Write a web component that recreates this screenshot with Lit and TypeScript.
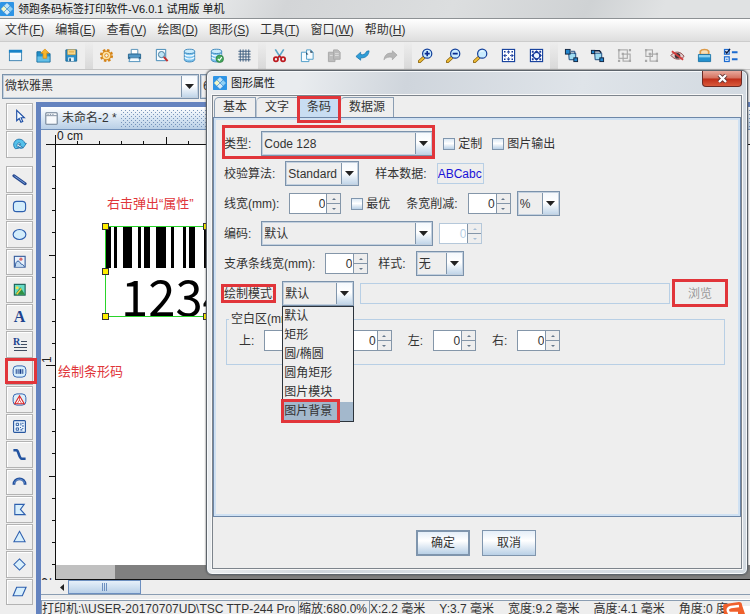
import { LitElement, html, svg, css, TemplateResult } from "lit";
import { customElement, property } from "lit/decorators.js";

const wrap = (body: TemplateResult, size = 16) =>
  html`<svg width=${size} height=${size} viewBox="0 0 16 16" aria-hidden="true">${body}</svg>`;

const logo = (size: number) => wrap(svg`
  <rect width="16" height="16" rx="1" fill="#2e95e6"/>
  <g stroke="#1b6fc0" stroke-width=".4"><path d="M8 .8l3.600 3.600L8 8 4.400 4.400z" fill="#bfe3f7"/><path d="M4.400 4.400L8 8l-3.600 3.600L.8 8z" fill="#f2f7c8"/>
  <path d="M11.600 4.400L15.200 8l-3.600 3.600L8 8z" fill="#8fd0f5"/><path d="M8 8l3.600 3.600L8 15.200l-3.600-3.600z" fill="#d6ecfa"/></g>`, size);

const lens = (mark: TemplateResult) => svg`
  <path d="M1.600 14.400l4.600-4.200" stroke="#8a6410" stroke-width="3.600" stroke-linecap="round"/>
  <path d="M1.800 14.200l4.200-3.800" stroke="#f0bd35" stroke-width="2" stroke-linecap="round"/>
  <circle cx="9.800" cy="6" r="4.900" fill="#c9ecff" stroke="#123f9a" stroke-width="1.300"/>${mark}`;
const cylinder = svg`
  <path d="M2.500 3.500v9c0 1.200 2.400 2.400 5.500 2.400s5.500-1.200 5.500-2.400v-9z" fill="#7cc3ee" stroke="#3c86bb"/>
  <path d="M3 6.600c1 2.400 9 2.400 10 0M3 9.900c1 2.400 9 2.400 10 0" fill="none" stroke="#f3fbff" stroke-width="1.200"/>
  <ellipse cx="8" cy="3.600" rx="5.500" ry="2.300" fill="#c9ebfc" stroke="#3c86bb"/>`;
const groupBoxes = (a: number) => svg`
  <g fill="none" stroke="#a9a9a9" stroke-width="1.200"><rect x="2" y="2" width=${a} height=${a}/><rect x="6.500" y="6.500" width="7.500" height="7.500"/></g>
  <g fill="#a9a9a9"><path d="M1 1h2.400v2.400H1zM12.600 ${a > 8 ? 1 : 5}h2.400v2.400h-2.400zM1 12.600h2.400v2.400H1zM12.600 12.600h2.400v2.400h-2.400zM5 5h2.400v2.400H5z"/></g>`;
const nodes = (b: TemplateResult) => svg`
  <path d="M5 5.500h7.500v7h-7z" fill="#9edcf2" stroke="#17457c"/>${b}
  <rect x="10.500" y="10.500" width="4" height="4" fill="#2387cf" stroke="#10243f"/>`;

const icons: Record<string, TemplateResult> = {
  新建: svg`<rect x="1.500" y="2.500" width="13" height="11" fill="#eef7fc" stroke="#3b80b0"/><path d="M1 2h14v3H1z" fill="#1683c8"/><path d="M2 6h12v1H2z" fill="#fff"/>`,
  打开: svg`<path d="M1 4h4l1 2h9v9H1z" fill="#218fc9" stroke="#146b9c"/><path d="M1.500 9h13v5.500h-13z" fill="#65bfe6"/><path d="M9.500 1L14 5.500h-2.500V11h-4V5.500H5z" fill="#f7b52c" stroke="#d48a11" stroke-width=".7"/>`,
  保存: svg`<path d="M2 2h11.500v12H2z" fill="#2a8fc9" stroke="#1a6795"/><path d="M4 2h8v5H4z" fill="#fff1bf" stroke="#e2a434" stroke-width=".8"/><path d="M5 3.500h6M5 5.200h6" stroke="#e2a434"/><path d="M4.500 10h6v4h-6z" fill="#e9f5fb"/><path d="M5.500 11h2v3h-2z" fill="#2a5f85"/>`,
  设置: svg`<circle cx="8" cy="8" r="5.900" fill="none" stroke="#d48318" stroke-width="2.200" stroke-dasharray="2.600 2.030"/><circle cx="8" cy="8" r="4.700" fill="#ffe3a3" stroke="#d98a1c" stroke-width="1.200"/><circle cx="8" cy="8" r="1.900" fill="#f4f4f4" stroke="#d98a1c"/>`,
  打印: svg`<path d="M4.500 1.500h7v5h-7z" fill="#fff" stroke="#5591b8"/><path d="M1.500 6.500h13v5h-13z" fill="#5097c6" stroke="#28658f"/><path d="M2 10h12v1H2z" fill="#173e60"/><path d="M3.500 10.500h9l1.500 4H2z" fill="#f6fbfe" stroke="#4d8fbb"/>`,
  预览: svg`<path d="M2.500 1.500h10v12h-10z" fill="#f7fbfe" stroke="#3e86b4"/><circle cx="8" cy="7" r="3.300" fill="#bde4f5" stroke="#487797"/><path d="M10.500 9.500l4 4.500" stroke="#c3302f" stroke-width="2.200"/>`,
  数据库: cylinder,
  数据连接: svg`${cylinder}<circle cx="11.500" cy="11.500" r="4" fill="#44a95c" stroke="#24733a" stroke-width=".7"/><path d="M9.500 11.500l1.500 1.700 2.600-3.400" fill="none" stroke="#fff" stroke-width="1.300"/>`,
  网格: svg`<path d="M3.500 1.500v13M6.500 1.500v13M9.500 1.500v13M12.500 1.500v13M1.500 3.500h13M1.500 6.500h13M1.500 9.500h13M1.500 12.500h13" stroke="#3f5f80" stroke-width="1"/>`,
  剪切: svg`<path d="M3.500 1.500l5.800 9M12.500 1.500l-5.800 9" stroke="#5aa7c8" stroke-width="1.800"/><circle cx="4.200" cy="12" r="2.200" fill="none" stroke="#bd1a20" stroke-width="1.900"/><circle cx="11.800" cy="12" r="2.200" fill="none" stroke="#bd1a20" stroke-width="1.900"/><path d="M6 10.500l2-2 2 2" fill="none" stroke="#bd1a20" stroke-width="1.500"/>`,
  复制: svg`<g fill="#f6fbfe" stroke="#4b9bc7"><path d="M1.500 4.500h6l2 2v8h-8z"/><path d="M7 2h4.500L14 4.500V12H7z"/></g><path d="M11 2v3h3" fill="#24435c"/><path d="M6.500 4.500v2.500h2.500" fill="#24435c"/>`,
  粘贴: svg`<g fill="#bcbcbc" stroke="#a9a9a9"><path d="M1.500 4.500h7v10h-7z"/><path d="M7 2h4.500L14 4.500V12H7z"/></g><path d="M8.500 6h4M8.500 8h4M3 8h3" stroke="#ddd"/>`,
  撤销: svg`<path d="M1 9l5-4.500V7c3 .6 5-.4 6.500-3.500L15 3c-.3 4.600-3.500 8-9 7.500V13z" fill="#2f9ed8" stroke="#1874ac" stroke-width=".8"/>`,
  重做: svg`<path d="M15 7.500L10 3v2.500C5 5 2 7 1 12.500c2-2.500 5-3.500 9-2.500v2.500z" fill="#b5b5b5" stroke="#a6a6a6" stroke-width=".8"/>`,
  放大: lens(svg`<path d="M9.800 3.300v5.400M7.100 6h5.400" stroke="#0a2a90" stroke-width="1.700"/>`),
  缩小: lens(svg`<path d="M7.100 6h5.400" stroke="#0a2a90" stroke-width="1.900"/>`),
  缩放: lens(svg`<path d="M7.500 4.500c.8-1.400 2.500-1.600 3.500-1" stroke="#fff" fill="none"/>`),
  适合窗口: svg`<rect x="1.500" y="1.500" width="13" height="13" fill="#fff" stroke="#143f9c" stroke-width="1.200"/><g fill="#14389a"><path d="M8 2.300l2 2.500H6zM8 13.700l2-2.500H6zM2.300 8l2.500-2v4zM13.700 8l-2.500-2v4z"/><path d="M3.200 3.200h1.600v1.600H3.200zM11.200 3.200h1.600v1.600h-1.600zM3.200 11.200h1.600v1.600H3.200zM11.200 11.200h1.600v1.600h-1.600zM7.500 4.800h1v1.400h-1zM7.500 9.800h1v1.400h-1zM4.800 7.500h1.400v1H4.800zM9.800 7.500h1.400v1H9.800z"/></g>`,
  实际大小: svg`<rect x="1.500" y="1.500" width="13" height="13" fill="#fff" stroke="#143f9c" stroke-width="1.200"/><path d="M8 2.300l2.500 2.200h-5zM8 13.700l2.500-2.200h-5zM2.300 8l2.200-2.500v5zM13.700 8l-2.200-2.500v5zM3 3h2v2H3zM11 3h2v2h-2zM3 11h2v2H3zM11 11h2v2h-2z" fill="#14389a"/><circle cx="8" cy="8" r="3.400" fill="#eaf5ff" stroke="#14389a" stroke-width="1.200"/>`,
  上移: nodes(svg`<rect x="1.500" y="1.500" width="5" height="5" fill="#2387cf" stroke="#10243f"/><path d="M7.500 3.500h4v3" stroke="#17457c" fill="none"/>`),
  下移: nodes(svg`<rect x="1.500" y="2.500" width="3.500" height="3.500" fill="#2387cf" stroke="#10243f"/><path d="M5 3h5l2 2" stroke="#0c1f3d" stroke-width="1.500" fill="none"/>`),
  组合: groupBoxes(9),
  取消组合: groupBoxes(7),
  隐藏: svg`<path d="M1 8c3.500-5 10.500-5 14 1-4 4.500-10.500 3.500-14-1z" fill="#e3cdcd" stroke="#8a4444"/><circle cx="8" cy="8.200" r="3" fill="#3c3338"/><path d="M2 3.500l12 9" stroke="#d33c3c" stroke-width="2"/>`,
  锁定: svg`<path d="M3.500 7V3.500C5 1 11 1 12.500 3.500V7z" fill="#f8dfb8" stroke="#dc9a48" stroke-width="1.800"/><path d="M1.500 7h13v7.500h-13z" fill="#2491ce" stroke="#1d75a8"/><path d="M2 7.500h12v2.500H2z" fill="#8ad1f2"/>`,
  列表: svg`<g fill="#eaf4ff" stroke="#1c6bd0" stroke-width="1.300"><rect x="1.600" y="1.600" width="5" height="5"/><rect x="1.600" y="9.400" width="5" height="5"/></g><path d="M2.500 3.500l1.500 2L7.500 1" stroke="#0a173d" stroke-width="1.500" fill="none"/><path d="M9.500 4.500h6M9.500 12h6" stroke="#1c6bd0" stroke-width="2"/><path d="M3 12h2" stroke="#1c6bd0"/>`,

  选择: svg`<path d="M5 1.500v11l2.700-2.400 1.800 4.100 2-.9-1.800-4h3.500z" fill="#f4fbff" stroke="#1f4fa5" stroke-width="1.200"/>`,
  旋转: svg`<path d="M3.500 12.500C-.5 8 3 2.300 7.500 2.300c3.300 0 5.300 1.700 6 4.200l1.800.3-3.300 4.700-5-3.500 2.500-.3C8.500 5.500 5.300 6 5.300 9c0 1.300.7 2.500 1.700 3z" fill="#55c1ea" stroke="#1b6fa8" stroke-width=".9"/><path d="M6.500 10c1.500 2.500 4.500 2 5 1" fill="none" stroke="#1c79b5" stroke-width="1.500"/>`,
  直线: svg`<path d="M2 4l12 8.500" stroke="#27498f" stroke-width="3.200" stroke-linecap="round"/><path d="M2.500 4.200l11.300 8" stroke="#7ca3dd" stroke-width="1"/>`,
  圆角矩形: svg`<rect x="1.500" y="2.500" width="13" height="11" rx="3.500" fill="#d3edfb" stroke="#2d5fae" stroke-width="1.200"/>`,
  椭圆: svg`<ellipse cx="8" cy="8" rx="6.800" ry="5.300" fill="#d3edfb" stroke="#2d5fae" stroke-width="1.200"/>`,
  图片: svg`<rect x="2.500" y="2.500" width="11.500" height="11.500" fill="#e8f1fb" stroke="#375d9d" stroke-width="1.200"/><circle cx="9.500" cy="5.500" r="1.700" fill="#d9696b"/><path d="M3.500 13.500c0-4 1.500-6 3-6s2 2 3 3 2.500 0 3.500 3" fill="#c3dbf2" stroke="#28559a"/>`,
  图像: svg`<rect x="2.500" y="2.500" width="11.500" height="11.500" fill="#65dcc5" stroke="#195e55" stroke-width="1.200"/><circle cx="5.500" cy="6" r="1.600" fill="#f8df4d"/><path d="M3 13.500l6-8 5 8z" fill="#2f9045"/><path d="M5 13l5-6" stroke="#f1ca47" stroke-width="1.500"/>`,
  条形码: svg`<rect x="1.200" y="2" width="13.600" height="12" rx="4" fill="#d8effc" stroke="#2d5fae"/><path d="M4.500 5.500v5M6.500 5.500v5M11.500 5.500v5" stroke="#173b88"/><path d="M9 5.500v5" stroke="#173b88" stroke-width="2"/>`,
  警示: svg`<rect x="1.200" y="2" width="13.600" height="12" rx="4" fill="#dceffa" stroke="#2d5fae"/><path d="M8 4l5 8.500H3z" fill="#fff" stroke="#dd2626" stroke-width="1.200"/><path d="M8 4v4.500M5.500 12.500L8 8.500l2.500 4" fill="none" stroke="#dd2626" stroke-width=".8"/>`,
  二维码: svg`<rect x="1.700" y="1.700" width="12.600" height="12.600" rx="1" fill="#eaf5ff" stroke="#28579f" stroke-width="1.200"/><g fill="none" stroke="#28579f"><path d="M4.500 4.500h2.500v2.500h-2.500z"/><path d="M4.500 9.500h2.500v2.500h-2.500z"/></g><path d="M9 4h1v3H9zM11 4h1.200v1.200H11zM8.500 8.500h1v1h-1zM10.500 9.500h1.700v1h-1.700zM9 11h2v1.200H9zM11.200 6.500h1v2h-1z" fill="#28579f"/>`,
  折线: svg`<path d="M1.500 3.500H5c2 0 2.500 9 5.500 9h4" fill="none" stroke="#2253a0" stroke-width="2.800"/>`,
  圆弧: svg`<path d="M2 11.500C2 3 14 3 14 11.500" fill="none" stroke="#214f9c" stroke-width="3"/><path d="M2.600 10C3.500 4 12.500 4 13.400 10" fill="none" stroke="#83a9df" stroke-width=".8"/>`,
  多边形: svg`<path d="M3 2.500h10L9 8l5 5.500H3z" fill="#d8effc" stroke="#2d5fae" stroke-width="1.200"/>`,
  三角形: svg`<path d="M8 2.500L14 13.500H2z" fill="#d8effc" stroke="#2d5fae" stroke-width="1.100"/>`,
  菱形: svg`<path d="M8 2L14 8 8 14 2 8z" fill="#d8effc" stroke="#2d5fae" stroke-width="1.100"/>`,
  平行四边形: svg`<path d="M5 3.500h10L11 12.500H1.200z" fill="#d8effc" stroke="#2d5fae" stroke-width="1.200"/>`,
  文档: svg`<rect x="1" y="1" width="14" height="14" rx="1" fill="#f8fafc" stroke="#6e7f92" stroke-width="1.300"/><path d="M1.500 4.500h13" stroke="#6e7f92"/><path d="M3 3h1.500M6 3h1.500M9 3h1.500" stroke="#6e7f92"/>`,
};

const toolbar = [
  ["新建", "打开", "保存"],
  ["设置", "打印", "预览", "数据库", "数据连接", "网格"],
  ["剪切", "复制", "粘贴", "撤销", "重做"],
  ["放大", "缩小", "缩放", "适合窗口", "实际大小"],
  ["上移", "下移", "组合", "取消组合", "隐藏", "锁定", "列表"],
];
const menus = [["文件", "F"], ["编辑", "E"], ["查看", "V"], ["绘图", "D"], ["图形", "S"], ["工具", "T"], ["窗口", "W"], ["帮助", "H"]];
const modeTools = ["选择", "旋转"];
const drawTools = ["直线", "圆角矩形", "椭圆", "图片", "图像", "文字", "段落", "条形码", "警示", "二维码", "折线", "圆弧", "多边形", "三角形", "菱形", "平行四边形"];

const controls = css`
  button, input, select { font: inherit; color: inherit; margin: 0; box-sizing: border-box; border-radius: 0; }
  select {
    appearance: none; height: 25px; padding: 0 17px 0 2px; border: 1px solid #7b92ab; outline: none; color: #333;
    box-shadow: inset 0 0 0 1px #c3d0de;
    background:
      linear-gradient(#8095ab, #8095ab) right 16px top / 1px 100% no-repeat,
      url("data:image/svg+xml,%3Csvg xmlns='http://www.w3.org/2000/svg' width='9' height='5'%3E%3Cpath d='M0 0h9L4.500 5z' fill='%23222'/%3E%3C/svg%3E") right 4px center no-repeat,
      linear-gradient(#f4f8fc, #fff 45%, #bcd2e7) right / 16px 100% no-repeat,
      #eee;
  }
  .mark { position: absolute; border: 3px solid #e1353a; pointer-events: none; }
`;

@customElement("number-spinner")
class NumberSpinner extends LitElement {
  @property() label = "";
  @property({ type: Boolean }) disabled = false;
  static styles = [controls, css`
    :host { display: flex; width: 43px; height: 21px; box-sizing: border-box; border: 1px solid #8496a9; color: #333; }
    :host([disabled]) { color: #b8cfe5; border-color: #b5c8da; }
    input { flex: 1; min-width: 0; width: 0; border: 0; padding: 0 1px; text-align: right; background: #fff; outline: none; }
    .steps { display: flex; flex-direction: column; width: 13px; border-left: 1px solid #8496a9; }
    button { flex: 1; display: grid; place-items: center; padding: 0; border: 0; background: #eee; }
    button + button { border-top: 1px solid #8496a9; }
    svg { display: block; }
  `];
  render() {
    const fill = this.disabled ? "#a9bfd6" : "#66788c";
    return html`<input aria-label=${this.label} .value=${"0"} ?disabled=${this.disabled}>
      <span class="steps">
        <button aria-label="增加" ?disabled=${this.disabled}><svg width="4" height="2"><path d="M0 2L2 0l2 2z" fill=${fill} /></svg></button>
        <button aria-label="减少" ?disabled=${this.disabled}><svg width="4" height="2"><path d="M0 0l2 2 2-2z" fill=${fill} /></svg></button>
      </span>`;
  }
}

@customElement("shape-dialog")
class ShapeDialog extends LitElement {
  static styles = [controls, css`
    :host {
      display: flex; flex-direction: column; box-sizing: border-box; padding: 0 5px 5px; color: #333;
      border: 1px solid #5d646b; border-radius: 6px; background: linear-gradient(100deg, #e9ecef 15%, #cfd5dc 32%, #dfe4e9 60%, #d3dae1 85%);
      box-shadow: inset 0 0 0 1px #f7f9fb, 0 0 2px #444;
    }
    header { display: flex; align-items: center; gap: 4px; height: 24px; padding-left: 1px; font-size: 11px; color: #111; }
    header svg { display: block; }
    header h2 { margin: 0; font: inherit; flex: 1; }
    .close {
      align-self: flex-start; width: 40px; height: 16px; padding: 0; display: grid; place-items: center;
      border: 1px solid #6b2b25; border-top: 0; border-radius: 0 0 4px 4px;
      background: linear-gradient(#e9a99c, #d4705e 48%, #bf2d18 52%, #d95a3c);
    }
    .client { flex: 1; display: flex; flex-direction: column; border: 1px solid #7d848c; background: #eee; box-shadow: 0 0 0 1px #f8f8f8; }
    .tabs { display: flex; padding: 1px 0 0 1px; height: 20px; }
    .tabs button { position: relative; padding: 0 8px 1px; border: 1px solid #8a9db2; border-bottom: 0; border-top-left-radius: 5px; background: #eee; line-height: 18px; }
    .tabs button + button { border-left-color: #b9c5d2; }
    .tabs button.on { background: #c8ddf2; }
    .tabs .mark { inset: -2px -2px -6px; z-index: 1; }
    .panel { flex: 1; display: flex; flex-direction: column; gap: 5px; border: 1px solid #6d87a8; box-shadow: inset 0 0 0 2px #cfe1f3; padding: 13px 15px 0 10px; }
    .row { position: relative; display: flex; align-items: center; gap: 10px; height: 25px; }
    .type .mark { left: -2px; top: -6px; width: 207px; height: 28px; }
    .wide { width: 172px; }
    .algo { width: 74px; }
    .unit { width: 43px; }
    .style { width: 48px; }
    .mode { width: 72px; }
    .first { width: 52px; }
    .near { margin-left: -4px; }
    .apart { margin-left: 6px; }
    label.check { display: flex; align-items: center; gap: 3px; }
    input[type="checkbox"] { appearance: none; width: 12px; height: 12px; border: 1px solid #7f95ad; background: linear-gradient(#dce9f5, #fff 45%, #b9d0e6); }
    .sample { width: 47px; height: 21px; padding: 0; border: 1px solid #b8cfe5; background: #eee; color: #1a12d8; outline: none; }
    .path { flex: 1; min-width: 0; height: 21px; border: 1px solid #b8cfe5; background: #eee; }
    .boxed { position: relative; }
    .boxed .mark { inset: -2px -1px -1px -3px; }
    .modepick { position: relative; margin-left: -3px; display: flex; }
    .browse { position: relative; width: 50px; height: 23px; margin-left: -5px; padding: 0; border: 0; background: #eee; color: #999; }
    .browse .mark { inset: -3px -3px -2px; }
    .list {
      position: absolute; left: 0; top: 25px; z-index: 3; width: 72px; box-sizing: border-box; margin: 0; padding: 0;
      list-style: none; border: 1px solid #2c333b; background: #eee;
    }
    .list li { position: relative; height: 19px; line-height: 19px; padding-left: 1px; white-space: nowrap; }
    .list li.on { background: #a3b8cc; }
    .list .mark { left: -2px; top: -3px; width: 53px; height: 18px; }
    fieldset { margin: 1px 0 0 2px; padding: 4px 12px 13px; border: 1px solid #b8cfe5; display: flex; gap: 16px; min-width: 0; }
    legend { padding: 0 2px; margin-left: -10px; line-height: 14px; }
    .side { display: flex; align-items: center; gap: 10px; white-space: nowrap; }
    footer { display: flex; justify-content: center; gap: 12px; padding: 13px 2px 12px 0; }
    footer button { width: 54px; height: 26px; padding: 0; border: 1px solid #7f95ad; background: linear-gradient(#e4eef8, #fff 40%, #b9d0e6); }
    footer button.main { border-width: 2px; }
  `];
  render() {
    return html`
      <header>${logo(14)}<h2>图形属性</h2>
        <button class="close" aria-label="关闭"><svg width="11" height="9" viewBox="0 0 11 9"><path d="M2 1l7 7M9 1L2 8" stroke="#5d3030" stroke-width="4"/><path d="M2 1l7 7M9 1L2 8" stroke="#fff" stroke-width="2.400"/></svg></button>
      </header>
      <div class="client">
        <nav class="tabs" role="tablist">
          <button role="tab">基本</button><button role="tab">文字</button>
          <button role="tab" class="on" aria-selected="true">条码<span class="mark"></span></button>
          <button role="tab">数据源</button>
        </nav>
        <section class="panel">
          <div class="row type"><label for="type">类型:</label>
            <select id="type" class="wide"><option>Code 128</option></select>
            <label class="check"><input type="checkbox">定制</label>
            <label class="check"><input type="checkbox">图片输出</label><span class="mark"></span></div>
          <div class="row"><label for="algo">校验算法:</label>
            <select id="algo" class="algo"><option>Standard</option></select>
            <label class="apart" for="sample">样本数据:</label><input id="sample" class="sample" .value=${"ABCabc"}></div>
          <div class="row"><span>线宽(mm):</span><number-spinner class="first" label="线宽"></number-spinner>
            <label class="check"><input type="checkbox">最优</label>
            <span class="apart">条宽削减:</span><number-spinner label="条宽削减"></number-spinner>
            <select class="unit near" aria-label="单位"><option>%</option></select></div>
          <div class="row"><label for="enc">编码:</label>
            <select id="enc" class="wide"><option>默认</option></select>
            <number-spinner class="near" label="编码值" disabled></number-spinner></div>
          <div class="row"><span>支承条线宽(mm):</span><number-spinner label="支承条线宽"></number-spinner>
            <label for="style">样式:</label><select id="style" class="style"><option>无</option></select></div>
          <div class="row"><label class="boxed" for="mode">绘制模式:<span class="mark"></span></label>
            <span class="modepick"><select id="mode" class="mode"><option>默认</option></select>
              <ul class="list" role="listbox">
                ${["默认", "矩形", "圆/椭圆", "圆角矩形", "图片模块", "图片背景"].map((t, i) => html`
                  <li role="option" class=${i === 5 ? "on" : ""}>${t}${i === 5 ? html`<span class="mark"></span>` : ""}</li>`)}
              </ul></span>
            <input class="path near" aria-label="图片路径" disabled>
            <button class="browse" disabled>浏览<span class="mark"></span></button></div>
          <fieldset><legend>空白区(mm):</legend>
            ${["上", "下", "左", "右"].map((s) => html`<span class="side">${s}:<number-spinner label=${s}></number-spinner></span>`)}
          </fieldset>
        </section>
        <footer><button class="main">确定</button><button>取消</button></footer>
      </div>`;
  }
}

@customElement("app-root")
class AppRoot extends LitElement {
  static styles = [controls, css`
    :host {
      position: relative; display: flex; flex-direction: column; height: 100vh; overflow: hidden; background: #eee; color: #333;
      font-family: "Liberation Sans", "Noto Sans CJK SC", sans-serif; font-size: 12px; line-height: 16px;
    }
    svg { display: block; }
    .title { display: flex; align-items: center; gap: 4px; height: 18px; font-size: 11px; color: #111; border-bottom: 1px solid #8d9194; background: linear-gradient(115deg, #e6e8e9 28%, #d3d5d7 38%, #dcdedf 60%, #cfd2d4 78%, #e0e2e3 88%); }
    .title h1 { margin: 0; font: inherit; }
    .menu { display: flex; gap: 11px; height: 22px; align-items: center; padding-left: 5px; background: linear-gradient(#fff, #dedede); border-bottom: 1px solid #ccc; }
    .menu button { padding: 0; border: 0; background: none; white-space: nowrap; }
    .tools { display: flex; height: 27px; align-items: stretch; padding-left: 1px; border-bottom: 1px solid #c4c4c4; }
    .group { display: flex; }
    .g3 { width: 84px; } .g5 { width: 138px; } .g6 { width: 165px; } .g7 { width: 186px; }
    .group button { flex: 1; padding: 0; border: 0; background: none; display: grid; place-items: center; }
    .sep { width: 8px; background: linear-gradient(#ededed, #d9d9d9); }
    .fonts { display: flex; gap: 1px; height: 32px; align-items: center; padding-left: 2px; }
    .family { width: 197px; }
    .size { width: 60px; }
    .work { flex: 1; display: flex; min-height: 0; }
    .left { width: 36px; box-sizing: border-box; padding: 1px 3px 9px 6px; display: flex; flex-direction: column; gap: 8px; }
    .set { display: flex; flex-direction: column; gap: 1px; height: 55px; }
    .set.draw { height: auto; flex: 1; }
    .left button { position: relative; flex: 1; min-height: 0; padding: 0; border: 1px solid #b3b3b3; box-shadow: inset 1px 1px #fff; background: #eee; display: grid; place-items: center; }
    .left .mark { inset: -2px -5px 0 -2px; }
    .glyph { font: bold 16px/16px "Liberation Serif", serif; color: #1d438e; }
    .mdi { flex: 1; min-width: 0; display: flex; flex-direction: column; border: solid #6483bf; border-width: 5px 0 0 5px; }
    .doctitle { display: flex; align-items: center; gap: 4px; height: 22px; padding-left: 4px; border-bottom: 1px solid #6f8fb8; background: linear-gradient(#fff, #d3e2f1 60%, #b9cfe6); }
    .dots { flex: 1; height: 17px; background: conic-gradient(#9db5d1 25%, transparent 0) 0 0 / 2px 2px, none; opacity: .8; mask: none; }
    .dots {
      background:
        url("data:image/svg+xml,%3Csvg xmlns='http://www.w3.org/2000/svg' width='4' height='4'%3E%3Cpath d='M0 0h1v1H0zM2 2h1v1H2z' fill='%235f80ad'/%3E%3C/svg%3E") 0 0 / 4px 4px;
    }
    .sheet { flex: 1; min-height: 0; display: grid; grid-template: 15px 1fr / 15px 1fr; }
    .sheet svg { overflow: hidden; }
    .sheet text { font-size: 12px; fill: #222; }
    .canvas { position: relative; overflow: hidden; background: #fff; display: flex; flex-direction: column; justify-content: flex-end; border-bottom: 1px solid #111; }
    .edge { display: flex; height: 14px; background: #808080; }
    .edge span { width: 59px; background: #c0c0c0; }
    .note { position: absolute; left: 2px; top: 219px; color: #e0363a; font-size: 13px; white-space: nowrap; }
    .note.top { left: 51px; top: 51px; }
    .object { position: absolute; left: 46px; top: 78px; }
    .sheet .object text { font: 49px "Noto Sans CJK SC", sans-serif; fill: #000; }
    .scroll { display: flex; height: 14px; padding-left: 14px; border-bottom: 1px solid #8a9db2; }
    .scroll button { padding: 0; display: grid; place-items: center; border: 0; background: #eee; width: 13px; }
    .scroll .thumb { width: 73px; border: 1px solid #6c8fc0; background: linear-gradient(#e6f0fa, #b9d0e8); }
    .status { display: flex; height: 14px; margin-top: 5px; border-top: 1px solid #8a9db2; box-shadow: 0 -1px #fff; white-space: nowrap; box-sizing: border-box; overflow: hidden; }
    .status > span { border-left: 1px solid #8a9db2; }
    .printer { width: 256px; }
    .zoomcell { width: 70px; }
    .pos { display: flex; gap: 14px; }
    shape-dialog { position: absolute; left: 206px; right: 2px; top: 70px; height: 505px; z-index: 5; }
    .ime { position: absolute; right: 0; bottom: 0; z-index: 6; }
  `];
  render() {
    const ticks = (n: number) => Array.from({ length: n }, (_, i) => i + 1);
    const bars = [[0, 5], [8, 3], [17, 9], [32, 3], [38, 6], [50, 10], [65, 3], [77, 3], [83, 6], [98, 6], [108, 9]];
    return html`
      <div class="title">${logo(14)}<h1>领跑条码标签打印软件-V6.0.1 试用版 单机</h1></div>
      <nav class="menu">${menus.map(([t, k]) => html`<button>${t}(<u>${k}</u>)</button>`)}</nav>
      <div class="tools">${toolbar.map((g, i) => html`${i ? html`<span class="sep"></span>` : ""}
        <div class="group g${g.length}">${g.map((n) => html`<button aria-label=${n}>${wrap(icons[n], 15)}</button>`)}</div>`)}</div>
      <div class="fonts"><select class="family" aria-label="字体"><option>微软雅黑</option></select>
        <select class="size" aria-label="字号"><option>6</option></select></div>
      <div class="work">
        <div class="left">
          <div class="set">${modeTools.map((n) => html`<button aria-label=${n}>${wrap(icons[n], 15)}</button>`)}</div>
          <div class="set draw">${drawTools.map((n) => html`<button aria-label=${n}>${
            n === "文字" ? html`<span class="glyph">A</span>`
            : n === "段落" ? html`<svg width="14" height="14"><text x="0" y="8" font-family="Liberation Serif, serif" font-weight="bold" font-size="10" fill="#1d438e">R</text><path d="M8 4.500h6M8 7.500h6M1 10.500h13M1 13.500h13" stroke="#3f4c60"/></svg>`
            : wrap(icons[n], 15)}${n === "条形码" ? html`<span class="mark"></span>` : ""}</button>`)}</div>
        </div>
        <main class="mdi">
          <div class="doctitle">${wrap(icons["文档"], 13)}<span>未命名-2 *</span><span class="dots"></span></div>
          <div class="sheet">
            <svg width="15" height="15"><path d="M5 14.500h10M14.500 5v10" stroke="#111"/></svg>
            <svg width="100%" height="15"><path d="M0 14.500h2000" stroke="#111"/>
              ${ticks(40).map((i) => svg`<path d="M${Math.round(i * 22.1) - 0.5} ${i % 5 ? 11 : 7}v8" stroke="#111"/>`)}
              <text x="1" y="10">0 cm</text></svg>
            <svg width="15" height="100%"><path d="M14.500 0v2000" stroke="#111"/>
              ${ticks(40).map((i) => svg`<path d="M${i % 10 ? (i % 5 ? 11 : 8) : 5} ${Math.round(i * 22.1) - 0.5}H15" stroke="#111"/>`)}
              <text transform="translate(10 218) rotate(-90)">1</text><text transform="translate(10 439) rotate(-90)">2</text></svg>
            <div class="canvas">
              <span class="note top">右击弹出“属性”</span>
              <svg class="object" width="210" height="98">
                ${bars.map(([x, w]) => svg`<rect x=${x + 4} y="4" width=${w} height="41"/>`)}
                <text x="19" y="93">12345</text>
                <rect x="3.500" y="3.500" width="200" height="90" fill="none" stroke="#2ad42a"/>
                ${[[0, 0], [0, 45], [0, 90], [101, 0], [101, 90]].map(([x, y]) => svg`<rect x=${x + 0.5} y=${y + 0.5} width="6" height="6" fill="#ffee00" stroke="#333"/>`)}
              </svg>
              <span class="note">绘制条形码</span>
              <div class="edge"><span></span></div>
            </div>
          </div>
          <div class="scroll"><button aria-label="向左"><svg width="4" height="7"><path d="M4 0v7L0 3.500z" fill="#222"/></svg></button>
            <button class="thumb" aria-label="滚动条"><svg width="6" height="8"><path d="M.5 0v8M2.500 0v8M4.500 0v8" stroke="#6c8fc0"/></svg></button></div>
          <div class="status">
            <span class="printer">打印机:\\\\USER-20170707UD\\TSC TTP-244 Pro</span>
            <span class="zoomcell">缩放:680.0%</span>
            <span class="pos"><span>X:2.2 毫米</span><span>Y:3.7 毫米</span><span>宽度:9.2 毫米</span><span>高度:4.1 毫米</span><span>角度:0 度</span></span>
          </div>
        </main>
      </div>
      <shape-dialog></shape-dialog>
      <svg class="ime" width="30" height="12" viewBox="0 0 30 12"><path d="M20 4h10v8H20z" fill="#fff"/><path d="M3 4q0-2 2-2l14-2q3 0 3 3l3 9H4z" fill="#f0602c"/><path d="M19 4L11 5q-4 1-3 4l1 2h9" fill="none" stroke="#fff" stroke-width="2.600"/></svg>`;
  }
}
